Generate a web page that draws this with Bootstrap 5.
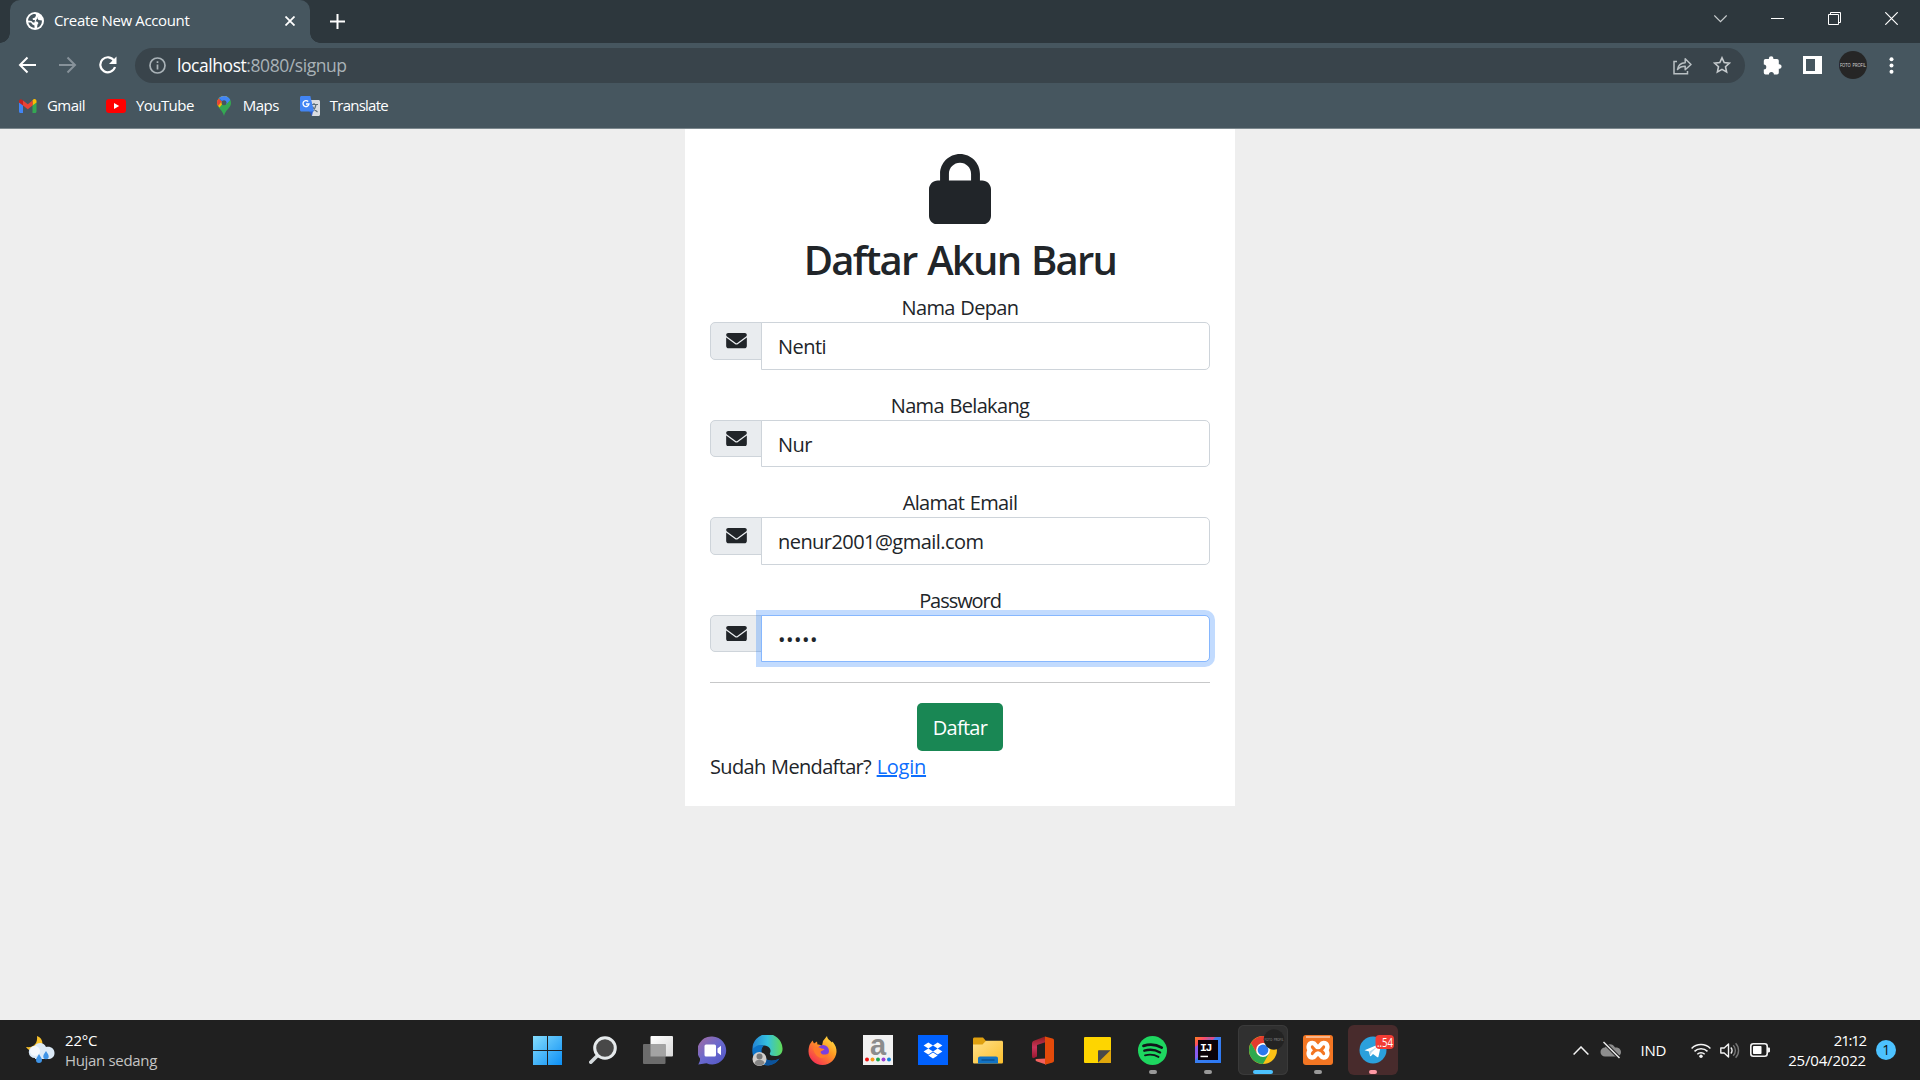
<!DOCTYPE html>
<html lang="id">
<head>
<meta charset="utf-8">
<title>Create New Account</title>
<link href="https://cdn.jsdelivr.net/npm/bootstrap@5.3.0/dist/css/bootstrap.min.css" rel="stylesheet">
<style>
html{font-size:20px}
body{width:1920px;height:1080px;overflow:hidden;background:#eee;font-family:"Open Sans","Noto Sans",sans-serif;color:#212529;font-size:20px;line-height:30px;letter-spacing:-.66px;word-spacing:1px}
svg{display:block;flex:none}
.ui-text{font-size:15px;line-height:20px;color:#fff;white-space:nowrap;letter-spacing:-.55px;word-spacing:0}
.tabstrip{height:43px;background:#2d373d}
.browser-tab{width:300px;height:43px;margin-left:10px;background:#46565f;border-radius:10px 10px 0 0;padding:0 15px 1px 16px;position:relative}
.browser-tab::before,.browser-tab::after{content:"";position:absolute;bottom:0;width:10px;height:10px}
.browser-tab::before{left:-10px;background:radial-gradient(circle at 0 0,transparent 9.5px,#46565f 10px)}
.browser-tab::after{right:-10px;background:radial-gradient(circle at 100% 0,transparent 9.5px,#46565f 10px)}
.browser-tab .tab-title{margin:0 0 2px 10px;letter-spacing:-.36px}
.new-tab{margin:14px 0 0 20px}
.window-buttons{gap:44px;padding:12px 22px 0 0}
.toolbar{height:45px;background:#46565f;padding:0 26px 1px 18px}
.address{width:1610px;height:35px;border-radius:18px;background:#39444b;margin-left:18px;padding:0 14px 0 14px}
.address-text{font-size:17.5px;line-height:24px;color:#a9b2b7;margin-left:11px;white-space:nowrap;letter-spacing:-.44px}
.bookmarks{height:41px;background:#46565f;border-bottom:1px solid #7b878d;padding:0 0 5px 18px}
.bookmarks .ui-text{padding-bottom:2px}
.viewport{height:891px}
.signup{width:550px;height:677px;background:#fff;padding:24.5px 25px 0}
.signup h1{font-size:40px;line-height:48px;font-weight:600;margin:12px 0 8px;height:48px;white-space:nowrap;letter-spacing:-1.75px;word-spacing:2px}
.field{margin-bottom:20px}
.field label{display:block;height:30px;line-height:32px;white-space:nowrap}
.field .input-group-text{width:52px;height:37.5px;padding:10px 0 0 15px;background:#e9ecef;border-color:#ced4da;border-radius:5px 0 0 5px}
.field .form-control{height:47.5px;padding:8px 16px 6px;border-color:#ced4da;border-radius:0 5px 5px 0;font-size:20px;line-height:30px;letter-spacing:-.55px}
.field .is-focused{border-color:#86b7fe;box-shadow:0 0 0 5px rgba(13,110,253,.25);z-index:5}
.field input[type=password]{letter-spacing:.5px}
.field .tight-label{letter-spacing:-1.050px}
.signup hr{margin:20px 0;height:1px;border:0;background:#212529;opacity:.25}
.btn-signup{width:86px;height:48px;padding:2px 0 0;border:0;border-radius:5px;font-size:20px;letter-spacing:-.73px;background:#198754}
.login-line{line-height:32px}
.login-link{letter-spacing:-.25px}
.taskbar{height:60px;background:#202020}
.weather{width:520px;padding-left:26px}
.weather svg{margin-right:10px}
.muted-text{color:#c4c4c4;letter-spacing:-.33px}
.task-cell{width:55px;height:60px;padding:5px 2.5px}
.task-tile{width:50px;height:50px;border-radius:6px;position:relative}
.task-tile.lit{background:#303030;box-shadow:inset 0 0 0 1px #3a3a3a}
.task-tile.alert-tile{background:#482b2c}
.running{position:absolute;bottom:1px;left:21px;width:8px;height:4px;border-radius:2px;background:#999}
.lit .running{left:15px;width:20px;background:#4cc2ff}
.alert-tile .running{background:#ff99a4}
.tray{padding-right:24px}
.clock{width:79px;margin-left:17px;padding-bottom:1px}
.tray-badge{width:20px;height:20px;border-radius:50%;background:#4cc2ff;color:#111;font-size:14px;line-height:20px;text-align:center;margin-left:10px}
</style>
<script src="https://cdn.jsdelivr.net/npm/bootstrap@5.3.0/dist/js/bootstrap.bundle.min.js"></script>
</head>
<body>
<svg width="0" height="0" class="position-absolute">
 <defs>
  <symbol id="mail" viewBox="0 0 512 384"><path fill="#212529" d="M48 0C22 0 0 22 0 48c0 15 7 29 19 38l218 163c11 9 27 9 38 0L493 86c12-9 19-23 19-38 0-26-22-48-48-48zM0 112v208c0 35 29 64 64 64h384c35 0 64-29 64-64V112L294 275c-23 17-53 17-76 0z"/></symbol>
 </defs>
</svg>

<header>
 <div class="tabstrip d-flex">
  <div class="browser-tab d-flex align-items-center">
   <svg width="18" height="18" viewBox="0 0 18 18"><circle cx="9" cy="9" r="9" fill="#fff"/><path d="M9.500 2C6 1.500 2.500 4 2 8.500L5.500 9l1.500 1.500h1.500L9 8H7L6.500 6.500 9 5.500 10 3.500zM2.200 10.500C3 13.500 5 15.500 8.500 16v-2.500l-2-1L5 10.500zM12.500 4l-1 2.500 1 1.500 3.500.5c0 4-2 6.500-5 7.300l.5-3.300 1-1.500-1.500-1.500H9.500" fill="#46565f"/></svg>
   <span class="ui-text tab-title">Create New Account</span>
   <svg class="ms-auto" width="10" height="10" viewBox="0 0 10 10" stroke="#fff" stroke-width="1.8"><path d="M.5.5l9 9M9.500.5l-9 9"/></svg>
  </div>
  <svg class="new-tab" width="15" height="15" viewBox="0 0 15 15" stroke="#fff" stroke-width="2"><path d="M7.500 0v15M0 7.500h15"/></svg>
  <div class="window-buttons d-flex ms-auto">
   <svg width="13" height="13" viewBox="0 0 13 13" fill="none" stroke="#c9cdcf" stroke-width="1.200"><path d="M.3 3.500l6.200 6.200 6.200-6.200"/></svg>
   <svg width="13" height="13" viewBox="0 0 13 13" fill="#fff"><path d="M0 6h13v1H0z"/></svg>
   <svg width="13" height="13" viewBox="0 0 13 13" fill="none" stroke="#fff"><path d="M.5 2.500h10v10H.5zM2.500 2.500v-2h10v10h-2"/></svg>
   <svg width="13" height="13" viewBox="0 0 13 13" stroke="#fff" stroke-width="1.200"><path d="M.3.3l12.400 12.400M12.700.3L.3 12.700"/></svg>
  </div>
 </div>

 <div class="toolbar d-flex align-items-center">
  <svg width="18" height="18" viewBox="0 0 18 18" fill="none" stroke="#fff" stroke-width="2"><path d="M18 9H2.500M9.500 1.500L2 9l7.500 7.500"/></svg>
  <svg style="margin-left:23px" width="18" height="18" viewBox="0 0 18 18" fill="none" stroke="#87929a" stroke-width="2"><path d="M0 9h15.500M8.500 1.500L16 9l-7.500 7.500"/></svg>
  <svg style="margin-left:22px" width="18" height="18" viewBox="0 0 18 18" fill="none" stroke="#fff" stroke-width="2.200"><path d="M15.200 4.800A7.500 7.500 0 1 0 16 11"/><path d="M17.500.5V8H10z" fill="#fff" stroke="none"/></svg>
  <div class="address d-flex align-items-center">
   <svg width="17" height="17" viewBox="0 0 17 17" fill="none" stroke="#a9b2b7" stroke-width="1.700"><circle cx="8.500" cy="8.500" r="7.500"/><path d="M8.500 7.500v5M8.500 4.200v1.900"/></svg>
   <span class="address-text"><span class="text-white">localhost</span>:8080/signup</span>
   <svg class="ms-auto" style="margin-top:2px" width="19" height="18" viewBox="0 0 19 18" fill="none" stroke="#b9c0c3" stroke-width="1.500"><path d="M4 4.500H1v12.300h13.500V14"/><path d="M4.500 12.500c.6-4.200 3.200-6.500 7.700-6.700V1.800l5.800 5.700-5.800 5.300V9.300c-3.700 0-5.700.9-7.700 3.200z" stroke-linejoin="round"/></svg>
   <svg style="margin-left:21px" width="18" height="18" viewBox="0 0 18 18" fill="none" stroke="#c5cacd" stroke-width="1.600"><path d="M9 1.800l2.200 4.800 5.200.6-3.900 3.500 1.100 5.200L9 13.300l-4.600 2.600 1.100-5.200-3.900-3.500 5.200-.6z"/></svg>
  </div>
  <svg style="margin-left:18px" width="20" height="19" viewBox="0 0 20 19" fill="#fff"><path d="M2.500 3H6a2.200 2.200 0 1 1 4.300 0H14a1.800 1.800 0 0 1 1.800 1.800v3.400a2.300 2.300 0 1 1 0 4.500v4.100a1.800 1.800 0 0 1-1.800 1.800h-3.100a2.500 2.500 0 0 0-5 0H2.500A1.800 1.800 0 0 1 .8 16.800v-3.200a2.500 2.500 0 0 0 0-5V4.800A1.800 1.800 0 0 1 2.500 3z"/></svg>
  <svg style="margin-left:20px" width="19" height="18" viewBox="0 0 19 18"><path d="M0 0h19v18H0zM3 3v12h9V3z" fill="#fff" fill-rule="evenodd"/></svg>
  <svg style="margin-left:17px" width="28" height="28" viewBox="0 0 28 28"><circle cx="14" cy="14" r="14" fill="#262626"/><text x="1" y="15.700" font-size="5.500" fill="#ddd" textLength="26" lengthAdjust="spacingAndGlyphs" letter-spacing="0">FOTO PROFIL</text></svg>
  <svg class="ms-auto" width="5" height="17" viewBox="0 0 5 17" fill="#fff"><circle cx="2.500" cy="2.300" r="2"/><circle cx="2.500" cy="8.500" r="2"/><circle cx="2.500" cy="14.700" r="2"/></svg>
 </div>

 <div class="bookmarks d-flex align-items-center">
  <svg width="19" height="14" viewBox="0 0 19 14"><path d="M1 3v9.500C1 13.300 1.600 14 2.300 14H5V6z" fill="#4285f4"/><path d="M18.500 3v9.500c0 .8-.6 1.500-1.300 1.500h-2.700V6z" fill="#34a853"/><path d="M14.500 1.500v5l4-3V2c0-1.800-2-2.500-3.200-1.500z" fill="#fbbc04"/><path d="M5 6.500v-5l4.800 3.700 4.700-3.700v5l-4.700 3.700z" fill="#ea4335"/><path d="M1 2v1.500l4 3v-5L4.200.7C3 -.4 1 .3 1 2z" fill="#c5221f"/></svg>
  <span class="ui-text" style="margin-left:10px">Gmail</span>
  <svg style="margin-left:21px" width="20" height="14" viewBox="0 0 20 14"><rect width="20" height="14" rx="3" fill="#f00"/><path d="M8 4l5.200 3L8 10z" fill="#fff"/></svg>
  <span class="ui-text" style="margin-left:10px">YouTube</span>
  <svg style="margin-left:23px" width="14" height="20" viewBox="0 0 14 20"><path d="M7 0C10 0 14 2.300 14 7c0 5-5.500 6.500-7 13C5.500 13.500 0 12 0 7c0-4 3.200-7 7-7z" fill="#34a853"/><path d="M2 2.200C4.500-.8 9-.5 11 1.300L2.500 11.500C-.7 8.500-.3 4.500 2 2.200z" fill="#fbbc04"/><path d="M1.700 2.500L5 5.200 1 10C-.5 7.500-.3 4.500 1.700 2.500z" fill="#ea4335"/><path d="M2 2.200C4.500-.8 11-1.200 13.300 4L9 8.500 5 5.200z" fill="#4285f4"/><path d="M2 2.200l3 3" stroke="#1a73e8"/><circle cx="7" cy="6.800" r="2.500" fill="#46565f"/></svg>
  <span class="ui-text" style="margin-left:12px">Maps</span>
  <svg style="margin-left:21px" width="20" height="20" viewBox="0 0 20 20"><path d="M7 4h11.500c.8 0 1.500.7 1.500 1.500v13c0 .8-.7 1.500-1.500 1.500H12z" fill="#dadce0"/><path d="M10 8.500h8M14 7v1.500M12 15.500c2-1.500 3.500-3.500 4-7M12.500 10.500c1 2.500 2.500 4 5 5.500" fill="none" stroke="#5f6f78" stroke-width="1.200"/><path d="M9 15h4l-1 5z" fill="#2a56c6"/><path d="M1.500 0h8.800L14 15.500H1.500C.7 15.500 0 14.800 0 14V1.500C0 .7.7 0 1.500 0z" fill="#4285f4"/><path d="M8.200 5.500A3 3 0 1 0 9 8H6" fill="none" stroke="#fff" stroke-width="1.300"/></svg>
  <span class="ui-text" style="margin-left:10px;letter-spacing:-.75px">Translate</span>
 </div>
</header>

<main class="viewport">
 <div class="signup mx-auto">
  <svg class="mx-auto" width="62" height="70.500" viewBox="0 0 448 512" preserveAspectRatio="none" fill="#212529"><path d="M80 192v-48C80 64.500 144.500 0 224 0s144 64.500 144 144v48h16c35.300 0 64 28.700 64 64v192c0 35.300-28.700 64-64 64H64c-35.300 0-64-28.700-64-64V256c0-35.300 28.700-64 64-64zm64 0h160v-48c0-44.200-35.800-80-80-80s-80 35.800-80 80z"/></svg>
  <h1 class="text-center">Daftar Akun Baru</h1>
  <div class="field">
   <label class="text-center" for="first">Nama Depan</label>
   <div class="input-group align-items-start"><span class="input-group-text align-items-start"><svg width="21" height="15.500"><use href="#mail"/></svg></span><input id="first" class="form-control" value="Nenti"></div>
  </div>
  <div class="field">
   <label class="text-center" for="last">Nama Belakang</label>
   <div class="input-group align-items-start"><span class="input-group-text align-items-start"><svg width="21" height="15.500"><use href="#mail"/></svg></span><input id="last" class="form-control" value="Nur"></div>
  </div>
  <div class="field">
   <label class="text-center" for="mailaddr">Alamat Email</label>
   <div class="input-group align-items-start"><span class="input-group-text align-items-start"><svg width="21" height="15.500"><use href="#mail"/></svg></span><input id="mailaddr" class="form-control" value="nenur2001@gmail.com"></div>
  </div>
  <div class="field">
   <label class="text-center tight-label" for="pass">Password</label>
   <div class="input-group align-items-start"><span class="input-group-text align-items-start"><svg width="21" height="15.500"><use href="#mail"/></svg></span><input id="pass" type="password" class="form-control is-focused" value="12345"></div>
  </div>
  <hr>
  <button class="btn btn-success btn-signup d-block mx-auto" type="button">Daftar</button>
  <p class="login-line mb-0">Sudah Mendaftar? <a class="login-link" href="#">Login</a></p>
 </div>
</main>

<footer class="taskbar d-flex align-items-center">
 <div class="weather d-flex align-items-center">
  <svg width="29" height="28" viewBox="0 0 29 28"><path d="M11 0c6 2 7 9 3 13-4 3.500-11 3-14-2 7 1 12-3 11-11z" fill="#f9c22b"/><path d="M9 22a6 6 0 0 1-.5-12C11 6 18 6 20 11c5-1 8.500 2 8.500 6s-3 6-6.500 6H9z" fill="#dbe9f6"/><circle cx="9" cy="15" r="5" fill="#f4f8fc"/><path d="M13 18c2 3.500 3 4.500 3 6a3 3 0 0 1-6 0c0-1.500 1-2.500 3-6zM20 15c2 3 2.700 4 2.700 5.500a2.700 2.700 0 0 1-5.400 0C17.300 19 18 18 20 15z" fill="#3f94e6"/></svg>
  <div class="ui-text"><div style="letter-spacing:-.2px">22°C</div><div class="muted-text">Hujan sedang</div></div>
 </div>

 <div class="task-cell"><div class="task-tile d-flex align-items-center justify-content-center">
  <svg width="29" height="29" viewBox="0 0 29 29"><defs><linearGradient id="win" x1="0" y1="0" x2="1" y2="1"><stop stop-color="#84dcfc"/><stop offset="1" stop-color="#0c8ff5"/></linearGradient></defs><path d="M0 0h14v14H0zM15 0h14v14H15zM0 15h14v14H0zM15 15h14v14H15z" fill="url(#win)"/></svg></div></div>
 <div class="task-cell"><div class="task-tile d-flex align-items-center justify-content-center">
  <svg width="28" height="28" viewBox="0 0 28 28"><path d="M1.800 26.200l8-8" stroke="#d4d9dc" stroke-width="3.600" stroke-linecap="round"/><circle cx="16" cy="12" r="10.300" fill="#484848" stroke="#e6eaec" stroke-width="3"/></svg></div></div>
 <div class="task-cell"><div class="task-tile d-flex align-items-center justify-content-center">
  <svg width="30" height="28" viewBox="0 0 30 28"><defs><linearGradient id="tv" x1="0" y1="0" x2="1" y2="1"><stop stop-color="#fff"/><stop offset="1" stop-color="#d9d9d9"/></linearGradient></defs><rect x="7.500" width="22.500" height="20.500" rx="1" fill="url(#tv)"/><rect y="8" width="22.500" height="20" rx="1" fill="#6c6c6c"/><path d="M7.500 8h15v12.500h-15z" fill="#a3a3a3"/></svg></div></div>
 <div class="task-cell"><div class="task-tile d-flex align-items-center justify-content-center">
  <svg width="29" height="29" viewBox="0 0 29 29"><defs><linearGradient id="chat" x1="0" y1="0" x2="1" y2="1"><stop stop-color="#a56c9e"/><stop offset=".5" stop-color="#6a69ce"/><stop offset="1" stop-color="#5055c4"/></linearGradient></defs><path d="M14.500.5a14 14 0 1 1-6 26.800L.3 28.500c1.200-2 2-4 1.700-6A14 14 0 0 1 14.500.5z" fill="url(#chat)"/><rect x="6.500" y="8.500" width="11.500" height="12" rx="1.500" fill="#fff"/><path d="M19.500 12.500l3.500-2.700v9.400l-3.500-2.700z" fill="#fff"/></svg></div></div>
 <div class="task-cell"><div class="task-tile d-flex align-items-center justify-content-center">
  <svg width="31" height="31" viewBox="0 0 31 31"><defs><linearGradient id="e1"><stop stop-color="#2384d6"/><stop offset=".5" stop-color="#35c1de"/><stop offset="1" stop-color="#62db56"/></linearGradient></defs><path d="M.5 15A15 15 0 0 1 30.500 13c.5 6-3.500 8-7.500 8-3.500 0-6-1.200-5-3 1.500-2.800 0-7-5.500-7.500C6.500 10 2.500 13 .5 15z" fill="url(#e1)"/><path d="M.3 15c2-4 7-6.200 11.700-4.500-3.500 3-3.500 9.500 1 13 4.500 3.300 10 2.500 14.500 0C24 29 18 31 12.500 30 5 28.800 0 22.500.3 15z" fill="#0d74c8"/><path d="M12 12c-4 4-2 11 4 13 5 1.300 8.500 0 11.500-1.500-3 4.500-8 7.500-13 6.800C8 27 7 17 12 12z" fill="#0c539b"/><circle cx="7.500" cy="24" r="7" fill="#d2cfcc"/><circle cx="7.500" cy="21.500" r="3" fill="#777"/><path d="M2.500 28c1-4.500 9-4.500 10 0-2.500 3.500-7.500 3.500-10 0z" fill="#858585"/></svg></div></div>
 <div class="task-cell"><div class="task-tile d-flex align-items-center justify-content-center">
  <svg width="29" height="29" viewBox="0 0 29 29"><defs><linearGradient id="ff" x1="1" y1="0" x2=".2" y2="1"><stop stop-color="#fff44f"/><stop offset=".45" stop-color="#ff9a22"/><stop offset="1" stop-color="#f52a56"/></linearGradient></defs><path d="M2 8l2.500-3.500L6 7.500l3-2 .5 3c2 0 3.500.5 4.500 1.500L15 5l4-5c.5 3.500 3 4 5 6.500l.5-1c3 3.500 4.300 7 4 10.500C28 23 22 29 14.500 29S.5 23 .5 15.500C.5 12.500 1 10 2 8z" fill="url(#ff)"/><circle cx="15" cy="15" r="6" fill="#7a3fe0"/><path d="M5 12c3-1.500 6-1 8.500.5l3 .5c-.5 1.500-3 1.500-4 3 .5 3 5 3.500 8.500 1-1.500 5-8 6.500-12 3-2-2-3.500-5-4-8z" fill="#ff7a2b"/></svg></div></div>
 <div class="task-cell"><div class="task-tile d-flex align-items-center justify-content-center">
  <svg class="overflow-visible" width="30" height="30" viewBox="0 0 30 30"><path d="M0 0h30v30H0z" fill="#f1f1f1"/><text x="15" y="19.500" text-anchor="middle" font-family="Liberation Sans" font-weight="700" font-size="29" letter-spacing="0" fill="#8c8c8c">a</text><g><circle cx="4" cy="24.500" r="2" fill="#e11"/><circle cx="9.500" cy="24.500" r="2" fill="#f79a1c"/><circle cx="15" cy="24.500" r="2" fill="#1ba84f"/><circle cx="20.500" cy="24.500" r="2" fill="#9a3fd5"/><circle cx="26" cy="24.500" r="2" fill="#1684d8"/></g></svg></div></div>
 <div class="task-cell"><div class="task-tile d-flex align-items-center justify-content-center">
  <svg width="30" height="30" viewBox="0 0 30 30"><path d="M0 0h30v30H0z" fill="#0061fe"/><path d="M10.300 7.500l4.700 3-4.700 3-4.700-3zM19.700 7.500l4.700 3-4.700 3-4.700-3zM10.300 13.500l4.700 3-4.700 3-4.700-3zM19.700 13.500l4.700 3-4.700 3-4.700-3zM15 17.500l4.700 3-4.700 3-4.700-3z" fill="#fff"/></svg></div></div>
 <div class="task-cell"><div class="task-tile d-flex align-items-center justify-content-center">
  <svg width="30" height="27" viewBox="0 0 30 27"><defs><linearGradient id="fo" x1="0" y1="0" x2="1" y2="1"><stop stop-color="#ffe08a"/><stop offset="1" stop-color="#fcbf2c"/></linearGradient></defs><path d="M0 2c0-1 .7-1.500 1.500-1.500H10l3 3.500v5H0z" fill="#dfa00f"/><path d="M0 7.500h9.500L13 3.700h15.500c1 0 1.500.6 1.500 1.500V25c0 1-.6 1.500-1.500 1.500h-27C.6 26.500 0 26 0 25z" fill="url(#fo)"/><path d="M5 26.500v-5c0-1.300.8-2 2-2h16c1.200 0 2 .7 2 2v5z" fill="#1273c4"/><path d="M8.500 23h13" stroke="#0a4a86" stroke-width="1.200"/></svg></div></div>
 <div class="task-cell"><div class="task-tile d-flex align-items-center justify-content-center">
  <svg width="24" height="29" viewBox="0 0 24 29"><defs><linearGradient id="of" x1="0" y1="0" x2="0" y2="1"><stop stop-color="#8c1b1f"/><stop offset=".5" stop-color="#c9345a"/><stop offset="1" stop-color="#9b1730"/></linearGradient></defs><path d="M14 .5L3.500 4.500C1.500 5.300 1 6 1 8v12c0 1.500.7 2.500 2 2l3-1.500V9l9-3z" fill="url(#of)"/><path d="M5 23l10-.5V28.500L6 25.500c-1.500-.6-2-1.600-1-2.500z" fill="#f4615e"/><path d="M14 .5l7.500 2c1 .4 1.500 1 1.500 2v20c0 1-.5 1.600-1.500 2l-7.500 2.200z" fill="#e34a0a"/></svg></div></div>
 <div class="task-cell"><div class="task-tile d-flex align-items-center justify-content-center">
  <svg width="27" height="26" viewBox="0 0 27 26"><rect width="27" height="26" rx="1" fill="#fed500"/><path d="M14 26V14.500c0-.8.5-1.200 1.200-1.200H27V25c0 .6-.4 1-1 1z" fill="#e0a70c"/><path d="M14 25.500v-11c0-.8.5-1.200 1.200-1.200h11.300z" fill="#48484a"/></svg></div></div>
 <div class="task-cell"><div class="task-tile d-flex align-items-center justify-content-center">
  <svg width="29" height="29" viewBox="0 0 29 29"><circle cx="14.500" cy="14.500" r="14.500" fill="#1ed760"/><g fill="none" stroke="#10161a" stroke-linecap="round"><path d="M5.500 9.800c6-1.800 13-1.200 18.200 1.800" stroke-width="2.800"/><path d="M6.300 14.700c5-1.500 11-1 15.800 1.700" stroke-width="2.300"/><path d="M7 19.300c4.500-1.200 9.500-.7 13.500 1.600" stroke-width="1.900"/></g></svg><i class="running"></i></div></div>
 <div class="task-cell"><div class="task-tile d-flex align-items-center justify-content-center">
  <svg width="26" height="26" viewBox="0 0 26 26"><defs><linearGradient id="ij" x1="0" y1="0" x2="1" y2="1"><stop stop-color="#fc801d"/><stop offset=".2" stop-color="#fe4a6b"/><stop offset=".45" stop-color="#3b7ff0"/><stop offset="1" stop-color="#2a78f5"/></linearGradient></defs><path d="M0 0h26v26H0z" fill="url(#ij)"/><path d="M0 10l3-2v12l-3 3z" fill="#8a5cf0"/><path d="M14 0h6l-3 4z" fill="#e04a86"/><path d="M3 3h20v20H3z" fill="#0b0208"/><text x="5" y="13.500" font-family="Liberation Mono" font-weight="700" font-size="11.500" letter-spacing="-1.500" fill="#fff">IJ</text><path d="M5.500 18.700h7.500v1.500H5.500z" fill="#fff"/></svg><i class="running"></i></div></div>
 <div class="task-cell"><div class="task-tile lit d-flex align-items-center justify-content-center">
  <svg width="50" height="50" viewBox="0 0 50 50"><g transform="translate(25 25)"><circle r="14" fill="#fbc116"/><path d="M0-7H12.100A14 14 0 0 0-12.100-7L-6 3.500z" fill="#e33b2e"/><path d="M-12.100-7A14 14 0 0 0 0 14L6 3.500H-6z" fill="#2da94f"/><circle r="6.900" fill="#fff"/><circle r="5.400" fill="#2b78ee"/></g><circle cx="36" cy="14.500" r="10.300" fill="#232323"/><text x="26.500" y="16" font-size="4" fill="#999" textLength="19" lengthAdjust="spacingAndGlyphs" letter-spacing="0">FOTO PROFIL</text></svg><i class="running"></i></div></div>
 <div class="task-cell"><div class="task-tile d-flex align-items-center justify-content-center">
  <svg width="30" height="30" viewBox="0 0 30 30"><rect width="30" height="30" rx="3" fill="#f37623"/><path d="M3 2h24" stroke="#f9b58a" stroke-width="2"/><path d="M9.500 8c3.200 0 3 4 5.500 4s2.300-4 5.500-4c4 0 5 4.500 2.500 7.200 2.500 2.800 1.500 7.300-2.500 7.300-3.200 0-3-4-5.500-4s-2.300 4-5.500 4c-4 0-5-4.500-2.500-7.300C4.500 12.500 5.500 8 9.500 8z" fill="none" stroke="#fff" stroke-width="4.400"/></svg><i class="running"></i></div></div>
 <div class="task-cell"><div class="task-tile alert-tile d-flex align-items-center justify-content-center">
  <svg width="50" height="50" viewBox="0 0 50 50"><circle cx="25" cy="25" r="13.500" fill="#2ba0dc"/><path d="M16.500 25.200L32 18.800c.8-.3 1.300.2 1.100 1l-2.600 11.700c-.2.900-.8 1-1.500.6l-4-3-2 1.900c-.5.500-1 .3-1.100-.4l-.9-4z" fill="#fff"/><path d="M21.500 26.500l8-5-6 6-.8 3z" fill="#b5d6ea"/><rect x="27.500" y="10" width="18.500" height="14" rx="4" fill="#f23c34"/><text x="29" y="21.700" font-size="12.500" fill="#fff" textLength="16" lengthAdjust="spacingAndGlyphs" letter-spacing="0">..54</text></svg><i class="running"></i></div></div>

 <div class="tray d-flex align-items-center ms-auto">
  <svg width="16" height="9" viewBox="0 0 16 9" fill="none" stroke="#f2f2f2" stroke-width="1.500"><path d="M.6 8.500L8 1l7.400 7.500"/></svg>
  <svg style="margin-left:11px" width="22" height="18" viewBox="0 0 22 18"><path d="M5 15.500a4.500 4.500 0 0 1 0-9C7 2 13 2 15 6.500c4-.5 6 2 6 4.800 0 2.500-2 4.200-4.200 4.200z" fill="#8d8d8d"/><path d="M3.500 1l16 16" stroke="#202020" stroke-width="3.500"/><path d="M3.500 1l16 16" stroke="#efefef" stroke-width="1.500"/></svg>
  <span class="ui-text" style="margin-left:19px;letter-spacing:-.3px">IND</span>
  <svg style="margin-left:25px" width="20" height="15" viewBox="0 0 20 15" fill="none" stroke="#f2f2f2" stroke-width="1.500"><path d="M.6 5.500a13.300 13.300 0 0 1 18.800 0M3.500 8.400a9.200 9.200 0 0 1 13 0M6.300 11.200a5.300 5.300 0 0 1 7.400 0"/><circle cx="10" cy="13.200" r="1.700" fill="#f2f2f2" stroke="none"/></svg>
  <svg style="margin-left:9px" width="20" height="17" viewBox="0 0 20 17" fill="none" stroke="#f2f2f2" stroke-width="1.400"><path d="M.8 6h3.400L8.500 2v13l-4.300-4H.8z" stroke-linejoin="round"/><path d="M10.800 5.500a4.200 4.200 0 0 1 0 6"/><path d="M13.200 3.300a7.300 7.300 0 0 1 0 10.400M15.600 1.200a10.500 10.500 0 0 1 0 14.600" stroke="#777"/></svg>
  <svg style="margin-left:10px" width="20" height="14" viewBox="0 0 20 14"><rect x=".8" y=".8" width="16.400" height="12.400" rx="2.500" fill="none" stroke="#f2f2f2" stroke-width="1.600"/><rect x="3" y="3" width="8.500" height="8" rx=".8" fill="#fff"/><path d="M18 4.500h.8c.8 0 1.200.5 1.200 1.200v2.600c0 .7-.4 1.200-1.200 1.200H18z" fill="#f2f2f2"/></svg>
  <div class="clock ui-text text-end"><div style="letter-spacing:-1.200px">21:12</div><div style="letter-spacing:-.18px">25/04/2022</div></div>
  <div class="tray-badge">1</div>
 </div>
</footer>
</body>
</html>
